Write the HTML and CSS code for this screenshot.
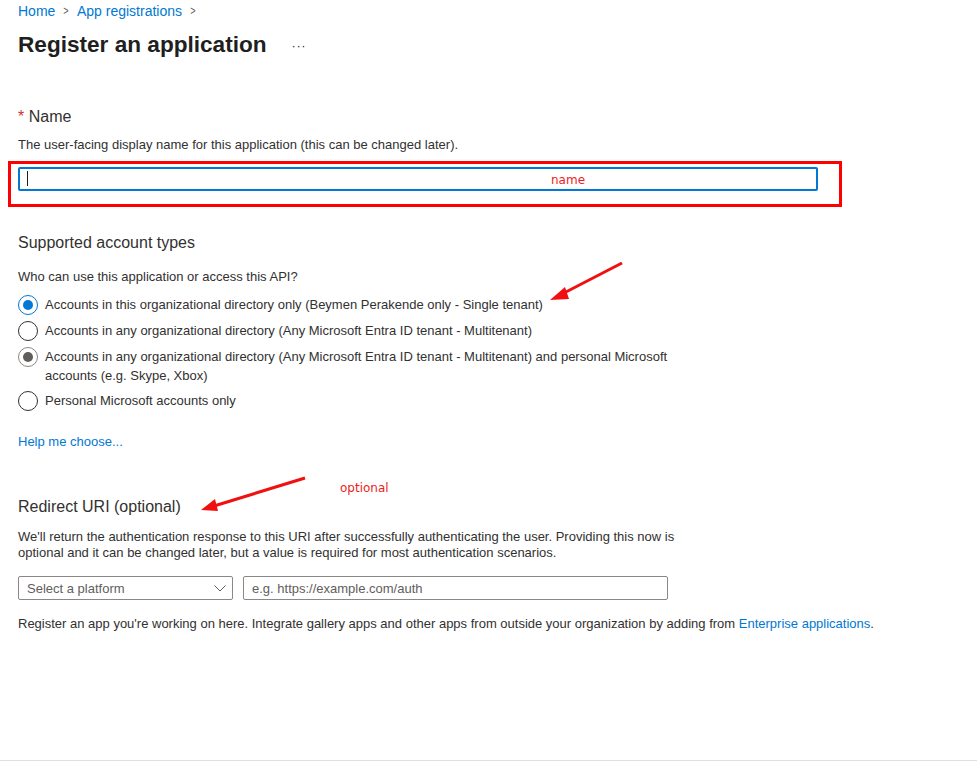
FILE: index.html
```html
<!DOCTYPE html>
<html>
<head>
    <link rel="stylesheet" href="styles.css">
</head>
<body>
    <div class="page">
        <div class="crumbs">
            <a href="#">Home</a>
            <span class="sep">&gt;</span>
            <a href="#">App registrations</a>
            <span class="sep">&gt;</span>
        </div>
        <div class="title-row">
            <h1>Register an application</h1>
            <span class="more">···</span>
        </div>

        <div class="field-label"><span class="req">*</span> Name</div>
        <p class="hint">The user-facing display name for this application (this can be changed later).</p>
        <div class="mark-box">
            <input type="text" class="name-input">
            <span class="caret"></span>
            <span class="note note-name">name</span>
        </div>

        <div class="section-title">Supported account types</div>
        <p class="hint who">Who can use this application or access this API?</p>
        <div class="radios">
            <label class="radio"><span class="dot checked"></span><span>Accounts in this organizational directory only (Beymen Perakende only - Single tenant)</span></label>
            <label class="radio"><span class="dot"></span><span>Accounts in any organizational directory (Any Microsoft Entra ID tenant - Multitenant)</span></label>
            <label class="radio"><span class="dot disabled"></span><span>Accounts in any organizational directory (Any Microsoft Entra ID tenant - Multitenant) and personal Microsoft accounts (e.g. Skype, Xbox)</span></label>
            <label class="radio"><span class="dot"></span><span>Personal Microsoft accounts only</span></label>
        </div>
        <a href="#" class="help">Help me choose...</a>

        <div class="section-title redirect">Redirect URI (optional)</div>
        <p class="hint para">We'll return the authentication response to this URI after successfully authenticating the user. Providing this now is optional and it can be changed later, but a value is required for most authentication scenarios.</p>
        <div class="uri-row">
            <div class="select">
                <span>Select a platform</span>
                <svg width="16" height="16" viewBox="0 0 16 16"><path d="M2.5 5.5 L8 11 L13.5 5.5" fill="none" stroke="#605e5c" stroke-width="1"/></svg>
            </div>
            <div class="uri-input">e.g. https://example.com/auth</div>
        </div>
        <p class="hint footer-note">Register an app you're working on here. Integrate gallery apps and other apps from outside your organization by adding from <a href="#">Enterprise applications</a>.</p>
    </div>
    <div class="bottom-bar"></div>

    <div class="annotations">
        <svg width="977" height="764" viewBox="0 0 977 764">
            <line x1="622" y1="263" x2="562" y2="294" stroke="#f01010" stroke-width="3"/>
            <polygon points="550,300 565,287 569,299" fill="#f01010"/>
            <line x1="305" y1="478" x2="214" y2="506" stroke="#f01010" stroke-width="3"/>
            <polygon points="201,510 215,499 218,511" fill="#f01010"/>
        </svg>
        <span class="note note-opt">optional</span>
    </div>
</body>
</html>
```

FILE: styles.css
```css
html, body {
  margin: 0;
  padding: 0;
}
body {
  font-family: "Liberation Sans", Arial, sans-serif;
  color: #323130;
  background: #fff;
  min-height: 100vh;
  display: flex;
  flex-direction: column;
  position: relative;
}
a {
  color: #0078d4;
  text-decoration: none;
}
.page {
  padding: 3px 18px 0 18px;
  flex: 1;
}
.crumbs {
  font-size: 14px;
  line-height: 16px;
  display: flex;
  gap: 7px;
}
.crumbs .sep {
  color: #605e5c;
  font-size: 13px;
  transform: scaleX(0.7);
}
.title-row {
  margin-top: 10px;
  display: flex;
  align-items: center;
  height: 32px;
}
h1 {
  margin: 0;
  font-size: 22.6px;
  font-weight: 600;
  color: #201f1e;
  line-height: 32px;
}
.more {
  margin-left: 25px;
  font-size: 13px;
  letter-spacing: 0.5px;
  color: #323130;
}
.field-label, .section-title {
  font-size: 16px;
  line-height: 20px;
}
.field-label {
  margin-top: 46px;
}
.req {
  color: #d13438;
}
.hint {
  margin: 9px 0 0 0;
  font-size: 13px;
  line-height: 18px;
}
.hint.who {
  margin-top: 15px;
}
.mark-box {
  position: relative;
  margin: 7px 0 0 -10px;
  width: 828px;
  height: 40px;
  border: 3px solid #ff0000;
  padding: 0;
}
.name-input {
  box-sizing: border-box;
  display: block;
  margin: 3px 0 0 7px;
  width: 800px;
  height: 24px;
  border: 2px solid #0078d4;
  border-radius: 2px;
  outline: none;
  padding: 0 7px;
  font-family: inherit;
  font-size: 13px;
}
.caret {
  position: absolute;
  left: 16px;
  top: 7px;
  width: 1px;
  height: 15px;
  background: #201f1e;
}
.note {
  position: absolute;
  color: #ee1c1c;
  font-family: "DejaVu Sans", sans-serif;
  font-size: 12px;
}
.note-name {
  left: 540px;
  top: 9px;
}
.section-title {
  margin-top: 26px;
}
.radios {
  margin-top: 9px;
  display: flex;
  flex-direction: column;
  gap: 6px;
  width: 665px;
}
.radio {
  display: flex;
  gap: 7px;
  font-size: 13px;
  line-height: 19px;
}
.dot {
  flex: none;
  box-sizing: border-box;
  width: 20px;
  height: 20px;
  border: 1px solid #323130;
  border-radius: 50%;
  display: flex;
  align-items: center;
  justify-content: center;
}
.dot.checked {
  border-color: #0078d4;
}
.dot.checked::after, .dot.disabled::after {
  content: '';
  width: 10px;
  height: 10px;
  border-radius: 50%;
  background: #0078d4;
}
.dot.disabled {
  border-color: #8a8886;
}
.dot.disabled::after {
  background: #605e5c;
}
.help {
  display: inline-block;
  margin-top: 22px;
  font-size: 13px;
  line-height: 18px;
}
.redirect {
  margin-top: 46px;
}
.para {
  margin-top: 12px;
  line-height: 16px;
  width: 665px;
}
.uri-row {
  margin-top: 15px;
  display: flex;
  gap: 10px;
}
.select, .uri-input {
  box-sizing: border-box;
  height: 24px;
  border: 1px solid #8a8886;
  border-radius: 2px;
  font-size: 13px;
  color: #605e5c;
  display: flex;
  align-items: center;
  padding: 0 8px;
}
.select {
  width: 215px;
  justify-content: space-between;
  padding-right: 4px;
}
.uri-input {
  width: 425px;
}
.footer-note {
  margin-top: 16px;
  line-height: 16px;
}
.bottom-bar {
  height: 3px;
  border-top: 1px solid #e1dfdd;
}
.annotations {
  position: absolute;
  left: 0;
  top: 0;
  width: 977px;
  height: 764px;
  pointer-events: none;
}
.annotations svg {
  display: block;
}
.note-opt {
  left: 340px;
  top: 481px;
}
```
